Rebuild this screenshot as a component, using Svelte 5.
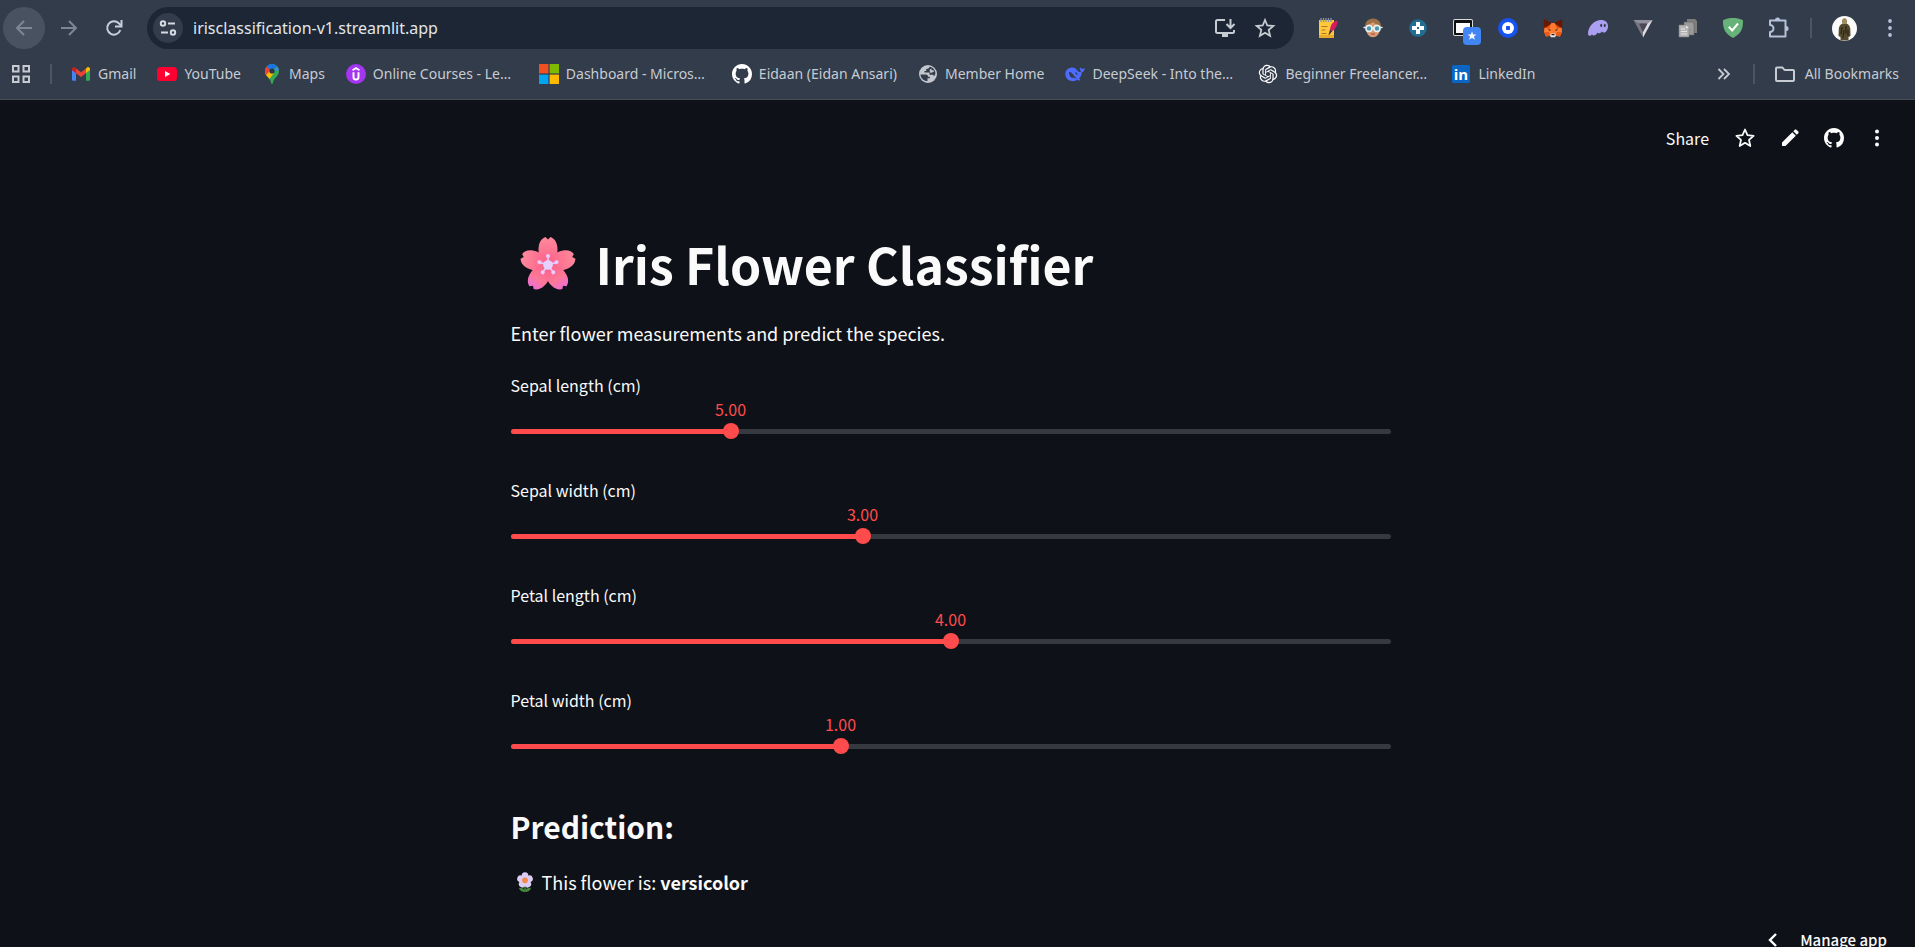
<script>
  let sliders = $state([
    { id: 'sepal-length', label: 'Sepal length (cm)', min: 4, max: 8, value: 5 },
    { id: 'sepal-width', label: 'Sepal width (cm)', min: 2, max: 4.5, value: 3 },
    { id: 'petal-length', label: 'Petal length (cm)', min: 1, max: 7, value: 4 },
    { id: 'petal-width', label: 'Petal width (cm)', min: 0.1, max: 2.5, value: 1 }
  ]);

  const percent = (s) => ((s.value - s.min) / (s.max - s.min)) * 100;

  const bookmarks = [
    { icon: 'gmail', label: 'Gmail' },
    { icon: 'youtube', label: 'YouTube' },
    { icon: 'maps', label: 'Maps' },
    { icon: 'udemy', label: 'Online Courses - Le…' },
    { icon: 'microsoft', label: 'Dashboard - Micros…' },
    { icon: 'github', label: 'Eidaan (Eidan Ansari)' },
    { icon: 'globe', label: 'Member Home' },
    { icon: 'deepseek', label: 'DeepSeek - Into the…' },
    { icon: 'openai', label: 'Beginner Freelancer…' },
    { icon: 'linkedin', label: 'LinkedIn' }
  ];

  const extensions = [
    ['notes', 'Notes'],
    ['face', 'Reader'],
    ['plus', 'Helper'],
    ['window', 'Window saver'],
    ['ring', 'Wallet'],
    ['fox', 'Fox wallet'],
    ['ghost', 'Ghost wallet'],
    ['triangle', 'Prism'],
    ['copies', 'Copies'],
    ['shield', 'Ad blocker'],
    ['puzzle', 'Extensions']
  ];
</script>

{#snippet githubMark()}
  <svg class="i20" viewBox="0 0 16 16" fill="#fff" aria-hidden="true"><path d="M8 0C3.58 0 0 3.58 0 8c0 3.54 2.29 6.53 5.47 7.59.4.07.55-.17.55-.38 0-.19-.01-.82-.01-1.49-2.01.37-2.53-.49-2.69-.94-.09-.23-.48-.94-.82-1.13-.28-.15-.68-.52-.01-.53.63-.01 1.08.58 1.23.82.72 1.21 1.87.87 2.33.66.07-.52.28-.87.51-1.07-1.78-.2-3.64-.89-3.64-3.95 0-.87.31-1.59.82-2.15-.08-.2-.36-1.02.08-2.12 0 0 .67-.21 2.2.82.64-.18 1.32-.27 2-.27.68 0 1.36.09 2 .27 1.53-1.04 2.2-.82 2.2-.82.44 1.1.16 1.92.08 2.12.51.56.82 1.27.82 2.15 0 3.07-1.87 3.75-3.65 3.95.29.25.54.73.54 1.48 0 1.07-.01 1.93-.01 2.2 0 .21.15.46.55.38A8.013 8.013 0 0016 8c0-4.42-3.58-8-8-8z" /></svg>
{/snippet}

{#snippet siteIcon(name)}
  {#if name === 'gmail'}
    <svg class="i20" viewBox="0 0 20 20" aria-hidden="true">
      <path d="M1 5.2v10.3c0 .8.5 1.3 1.300 1.300H5V8.200z" fill="#4285f4" />
      <path d="M15 8.200v8.600h2.700c.8 0 1.300-.5 1.300-1.300V5.200z" fill="#34a853" />
      <path d="M15 4.500v4.600l4-3V5c0-1.900-2-2.600-3.200-1.500z" fill="#fbbc04" />
      <path d="M5 9.200V4.400l5 3.800 5-3.800v4.800L10 13z" fill="#ea4335" />
      <path d="M1 5v1.200l4 3V4.400l-.8-.8C3 2.500 1 3.200 1 5z" fill="#c5221f" />
    </svg>
  {:else if name === 'youtube'}
    <svg class="i20" viewBox="0 0 20 20" aria-hidden="true">
      <rect x="0" y="3" width="20" height="14" rx="3.600" fill="#ff0033" />
      <path d="M8 7l5.300 3L8 13z" fill="#fff" />
    </svg>
  {:else if name === 'maps'}
    <svg class="i20" viewBox="0 0 20 20" aria-hidden="true">
      <clipPath id="pin"><path d="M10 0a7 7 0 0 0-7 7c0 3 1.600 4.600 3.300 6.600C8 15.700 8.700 17 9.100 18.900c.3 1.300 1.500 1.300 1.800 0 .4-1.900 1.100-3.200 2.800-5.300C15.400 11.600 17 10 17 7a7 7 0 0 0-7-7z" /></clipPath>
      <g clip-path="url(#pin)">
        <rect width="20" height="20" fill="#34a853" />
        <path d="M2 13L10 7l-7-5z" fill="#ea4335" />
        <path d="M2 9.500L7 6l5 3-7 9z" fill="#fbbc04" />
        <path d="M2 10V3l3-1 4 4-5 5z" fill="#ea4335" />
        <path d="M4.500 2.200L9 7l8-6-4-2H7z" fill="#1a73e8" />
        <path d="M17 1l-6 7 6-2z" fill="#4285f4" />
      </g>
      <circle cx="10" cy="7" r="2.600" fill="#2c3745" />
    </svg>
  {:else if name === 'udemy'}
    <svg class="i20" viewBox="0 0 20 20" aria-hidden="true">
      <circle cx="10" cy="10" r="10" fill="#a435f0" />
      <path d="M6.500 6.200L10 4.100l3.500 2.100" fill="none" stroke="#fff" stroke-width="1.700" />
      <path d="M7.500 8.200v4.700a2.500 2.500 0 0 0 5 0V8.200" fill="none" stroke="#fff" stroke-width="2" />
    </svg>
  {:else if name === 'microsoft'}
    <svg class="i20" viewBox="0 0 20 20" aria-hidden="true">
      <rect width="9.400" height="9.400" fill="#f25022" /><rect x="10.600" width="9.400" height="9.400" fill="#7fba00" />
      <rect y="10.600" width="9.400" height="9.400" fill="#00a4ef" /><rect x="10.600" y="10.600" width="9.400" height="9.400" fill="#ffb900" />
    </svg>
  {:else if name === 'github'}
    {@render githubMark()}
  {:else if name === 'globe'}
    <svg class="i20" viewBox="0 0 20 20" aria-hidden="true">
      <circle cx="10" cy="10" r="9" fill="#c3c7cd" />
      <path d="M2.500 10.500h5.300c1.700 0 2.200 1 2.200 2.200h1.800v1.500H9.500v2.900C5.500 17 2.500 14 2.500 10.500zM11.500 2.700c-.3 1.800-1.300 2.200-3.300 2.200v2H6.500v1.500h5v2.400h3c.8 0 1.300.5 1.300 1.500.8-.6 1.400-1.500 1.600-2.600.3-3.400-2.400-6.400-5.900-7z" fill="#323c4b" />
      <path d="M13.500 4.500v1.800h2.300v1.500l-3 1.200-1-1.200V5.500z" fill="#c3c7cd" />
    </svg>
  {:else if name === 'deepseek'}
    <svg class="i20" viewBox="0 0 20 20" aria-hidden="true">
      <path d="M19.700 3.900c-1.100.5-1.500.3-2.500 1.200-.7-.8-1.500-.7-2.200-1.800-.6 1.500-.2 2.800 1 3.600-.4 1.200-1 1.500-1.700 1.100C12.500 7 11.600 5.500 9.700 4 8.500 3.100 4.800 3 2.400 5.200.2 7.300-.1 10 .8 12.500c1.200 3.200 4.400 5 7.700 4.600 1.600-.1 2.800-.7 3.700-1.300.9.500 1.900.7 3.200.5-.2-.7-.8-1-1.300-1.700 1.700-1.800 2.500-3.700 2.800-6.300 1.600-.5 2.700-1.900 2.800-4.400z" fill="#4d6bfe" />
      <path d="M4 8c2.200-.2 3.300 1.200 4.600 3.100 1.200 1.900 1.800 2.600 3.300 3.400-1.300.2-2.300-.2-3.300-.9-.8.500-1.500.5-2.300 0C4.700 12.200 4 10.500 4 8z" fill="#323c4b" />
      <path d="M10 8.400c1.400-.2 2.400.8 2.700 2.300-.8.400-1.400 0-1.700-.8z" fill="#323c4b" />
    </svg>
  {:else if name === 'openai'}
    <svg class="i20" viewBox="-1 -1 26 26" fill="#fff" aria-hidden="true"><path d="M22.2819 9.8211a5.9847 5.9847 0 0 0-.5157-4.9108 6.0462 6.0462 0 0 0-6.5098-2.9A6.0651 6.0651 0 0 0 4.9807 4.1818a5.9847 5.9847 0 0 0-3.9977 2.9 6.0462 6.0462 0 0 0 .7427 7.0966 5.98 5.98 0 0 0 .511 4.9107 6.051 6.051 0 0 0 6.5146 2.9001A5.9847 5.9847 0 0 0 13.2599 24a6.0557 6.0557 0 0 0 5.7718-4.2058 5.9894 5.9894 0 0 0 3.9977-2.9001 6.0557 6.0557 0 0 0-.7475-7.0729zm-9.022 12.6081a4.4755 4.4755 0 0 1-2.8764-1.0408l.1419-.0804 4.7783-2.7582a.7948.7948 0 0 0 .3927-.6813v-6.7369l2.02 1.1686a.071.071 0 0 1 .038.052v5.5826a4.504 4.504 0 0 1-4.4945 4.4944zm-9.6607-4.1254a4.4708 4.4708 0 0 1-.5346-3.0137l.142.0852 4.783 2.7582a.7712.7712 0 0 0 .7806 0l5.8428-3.3685v2.3324a.0804.0804 0 0 1-.0332.0615L9.74 19.9502a4.4992 4.4992 0 0 1-6.1408-1.6464zM2.3408 7.8956a4.485 4.485 0 0 1 2.3655-1.9728V11.6a.7664.7664 0 0 0 .3879.6765l5.8144 3.3543-2.0201 1.1685a.0757.0757 0 0 1-.071 0l-4.8303-2.7865A4.504 4.504 0 0 1 2.3408 7.872zm16.5963 3.8558L13.1038 8.364 15.1192 7.2a.0757.0757 0 0 1 .071 0l4.8303 2.7913a4.4944 4.4944 0 0 1-.6765 8.1042v-5.6772a.79.79 0 0 0-.407-.667zm2.0107-3.0231l-.142-.0852-4.7735-2.7818a.7759.7759 0 0 0-.7854 0L9.409 9.2297V6.8974a.0662.0662 0 0 1 .0284-.0615l4.8303-2.7866a4.4992 4.4992 0 0 1 6.6802 4.66zM8.3065 12.863l-2.02-1.1638a.0804.0804 0 0 1-.038-.0567V6.0742a4.4992 4.4992 0 0 1 7.3757-3.4537l-.142.0805L8.704 5.459a.7948.7948 0 0 0-.3927.6813zm1.0976-2.3654l2.602-1.4998 2.6069 1.4998v2.9994l-2.5974 1.4997-2.6067-1.4997Z" /></svg>
  {:else if name === 'linkedin'}
    <svg class="i20" viewBox="0 0 20 20" aria-hidden="true">
      <rect x="1" y="1" width="18" height="18" rx="1.500" fill="#0a66c2" />
      <text x="10" y="16" text-anchor="middle" font-family="Open Sans" font-weight="700" font-size="15" fill="#fff">in</text>
    </svg>
  {/if}
{/snippet}

{#snippet extIcon(name)}
  {#if name === 'notes'}
    <svg class="i20" viewBox="0 0 20 20" aria-hidden="true">
      <path d="M1 2h15v17l-1 1H2l-1-1z" fill="#fdc93b" />
      <path d="M1 17h15v3H1z" fill="#e8a92c" />
      <path d="M3 0v4M5.500 0v4M8 0v4M10.500 0v4M13 0v4" stroke="#8793a5" stroke-width="1.300" />
      <path d="M3.500 8.500h6M3.500 12h4M3.500 15.500h5" stroke="#b0752d" stroke-width="1.200" />
      <path d="M19.500 2.500c-4 .5-7 4-7.500 9l2.500 1.500c3.500-2.500 5-6 5-10.500z" fill="#d81b60" />
      <path d="M12 11.500l2.500 1.500-3.500 4-.5-.3z" fill="#4a2b3b" />
    </svg>
  {:else if name === 'face'}
    <svg class="i20" viewBox="0 0 20 20" aria-hidden="true">
      <path d="M10 .5c5 0 8.300 3.500 8 9.500H2C1.700 4 5 .5 10 .5z" fill="#9c7044" />
      <path d="M3 9c1-3 4-2.500 7-5 2 2.500 6 2 7 5 .3 6-2.500 10.200-7 10.200S2.700 15 3 9z" fill="#d99b74" />
      <circle cx="6" cy="10.500" r="3" fill="#4b98ad" stroke="#e8f4f7" stroke-width="1.600" />
      <circle cx="14" cy="10.500" r="3" fill="#4b98ad" stroke="#e8f4f7" stroke-width="1.600" />
      <path d="M.5 9.500h2.200M17.300 9.500h2.200M8.800 10h2.400" stroke="#e8f4f7" stroke-width="1.500" />
      <path d="M8 16h4" stroke="#b6584c" stroke-width="1.300" />
    </svg>
  {:else if name === 'plus'}
    <svg class="i20" viewBox="0 0 20 20" aria-hidden="true">
      <circle cx="10" cy="10" r="8.800" fill="#226d92" />
      <path d="M8 4h4v4h4v4h-4v4H8v-4H4V8h4z" fill="#fff" />
      <path d="M9 9h2v2H9z" fill="#226d92" />
    </svg>
  {:else if name === 'window'}
    <span class="badged">
      <svg class="i20" viewBox="0 0 20 20" aria-hidden="true">
        <rect x="0" y="1" width="20" height="17" rx="2" fill="#d8dadd" />
        <rect x="1" y="2" width="18" height="15" rx="1" fill="#111" />
        <path d="M3 5h14v10H3z" fill="#fff" />
      </svg>
      <svg class="badge" viewBox="0 0 18 18" aria-hidden="true">
        <rect width="18" height="18" rx="4" fill="#4285f4" />
        <path d="M9 4.500l1.200 3h3.200l-2.500 2 1 3.200L9 10.800l-2.900 1.900 1-3.200-2.500-2h3.200z" fill="#fff" />
      </svg>
    </span>
  {:else if name === 'ring'}
    <svg class="i20" viewBox="0 0 20 20" aria-hidden="true">
      <circle cx="10" cy="10" r="10" fill="#1652f0" />
      <circle cx="10" cy="10" r="6" fill="#fff" />
      <rect x="8" y="8" width="4" height="4" rx=".8" fill="#1652f0" />
    </svg>
  {:else if name === 'fox'}
    <svg class="i20" viewBox="0 0 20 20" aria-hidden="true">
      <path d="M1.500 8L1 14l2 4.500 4.500-.8h5l4.500.8 2-4.500-.5-6-5.500-3H7z" fill="#ff7a2f" />
      <path d="M1 1l7.500 4L6 8.500 1.500 10 .5 7zM19 1l-7.500 4L14 8.500l4.500 1.500 1-3z" fill="#661800" />
      <path d="M2.500 9.500L7 6.500l-1 4.500zM17.500 9.500L13 6.500l1 4.500z" fill="#e34807" />
      <path d="M1 14h5l1.500 3.700L3 18.500zM19 14h-5l-1.500 3.700 4.500.8z" fill="#e85a18" />
      <path d="M5.500 11l2 .8v1l-1.700-.6zM14.500 11l-2 .8v1l1.700-.6z" fill="#2b1a12" />
      <path d="M7 17l1-1.500h4l1 1.500-.8 2.200H7.800z" fill="#e8e4e8" />
      <path d="M8.600 16h2.800l.3 1.200H8.300z" fill="#2b1a12" />
    </svg>
  {:else if name === 'ghost'}
    <svg class="i20" viewBox="0 0 20 20" aria-hidden="true">
      <path d="M0 15.500C0 9 6 2 13 2c5 0 7.300 3 7 7-.4 3.500-2.700 6-4.700 5.500-.9-.2-1.300-.7-1.500-1.300-.8 2.300-3.200 2.800-4.200 1.300C8.200 18 4 18.500 4.200 16 3 18.500 0 18.500 0 15.500z" fill="#ab9ff2" />
      <ellipse cx="13.200" cy="7.400" rx="1" ry="1.600" fill="#323c4b" /><ellipse cx="16.800" cy="7.400" rx="1" ry="1.600" fill="#323c4b" />
    </svg>
  {:else if name === 'triangle'}
    <svg class="i20" viewBox="0 0 20 20" aria-hidden="true">
      <path d="M.5 2h19L10 19.500z" fill="#77767f" />
      <path d="M.5 2h19l-5 3.500H6z" fill="#8f8e9a" />
      <path d="M19.500 2L10 19.500V14l4.500-8.500z" fill="#deddE5" />
      <path d="M6 5.500h8.500L10 14z" fill="#4b4754" />
    </svg>
  {:else if name === 'copies'}
    <svg class="i20" viewBox="0 0 20 20" aria-hidden="true">
      <path d="M9 1h8l2 2v12H9z" fill="#7d7d7d" />
      <path d="M6 4h8l2 2v11H6z" fill="#9b9b9b" stroke="#666" stroke-width=".6" />
      <path d="M1 7h7l3 3v9H1z" fill="#b5b5b5" stroke="#777" stroke-width=".6" />
      <path d="M3 11h4M3 13.500h6M3 16h6" stroke="#e5e5e5" />
      <path d="M8 7v3h3" fill="#e5e5e5" />
    </svg>
  {:else if name === 'shield'}
    <svg class="i20" viewBox="0 0 20 20" aria-hidden="true">
      <path d="M10 0c3.300 0 7 .6 10 2.200 0 7-.5 12.500-10 17.800C.5 14.700 0 9.200 0 2.200 3 .6 6.700 0 10 0z" fill="#67b279" />
      <path d="M5.800 8.800l3.400 3.700 5.800-7" fill="none" stroke="#fff" stroke-width="2" />
    </svg>
  {:else if name === 'puzzle'}
    <svg class="i22" viewBox="0 0 22 22" fill="none" stroke="#b4c1d8" stroke-width="2" stroke-linejoin="round" aria-hidden="true">
      <path d="M3 3.500H18.500V19.500H3v-4.500a3.200 3.200 0 0 0 0-7z" />
      <path d="M8 3a2.600 2.600 0 0 1 5.200 0zM19 8.900a2.600 2.600 0 0 1 0 5.200z" fill="#b4c1d8" stroke="none" />
    </svg>
  {/if}
{/snippet}

<div class="browser">
  <header class="chrome">
    <div class="nav-row">
      <button class="nav disabled hover" aria-label="Back">
        <svg viewBox="0 0 20 20" class="i20"><path d="M18 10H3M10 3l-7 7 7 7" fill="none" stroke="currentColor" stroke-width="2" /></svg>
      </button>
      <button class="nav disabled" aria-label="Forward">
        <svg viewBox="0 0 20 20" class="i20"><path d="M2 10h15M10 3l7 7-7 7" fill="none" stroke="currentColor" stroke-width="2" /></svg>
      </button>
      <button class="nav" aria-label="Reload">
        <svg viewBox="0 0 20 20" class="i20"><path d="M16.300 12a6.700 6.700 0 1 1-1.500-6.700L17 7.500" fill="none" stroke="currentColor" stroke-width="2" /><path d="M17.500 2v6.500H11" fill="none" stroke="currentColor" stroke-width="2" /></svg>
      </button>
      <div class="address">
        <button class="tune" aria-label="View site information">
          <svg viewBox="0 0 20 20" class="i20" fill="none" stroke="#d4dae4" stroke-width="2"><circle cx="5" cy="5.500" r="2.200" /><path d="M10 5.500h7M3 14.500h7" /><circle cx="15" cy="14.500" r="2.200" /></svg>
        </button>
        <input class="url" type="text" value="irisclassification-v1.streamlit.app" aria-label="Address" spellcheck="false" />
        <button class="inbar" aria-label="Install app">
          <svg viewBox="0 0 22 22" class="i22" fill="none" stroke="#c7cbd2" stroke-width="2"><path d="M11 3H3.500q-1.500 0-1.500 1.500v10q0 1.500 1.500 1.500h15q1.500 0 1.500-1.500V13" /><path d="M16.500 2v8.500M12.500 7l4 4 4-4" /><path d="M8 16h6v4H8z" fill="#c7cbd2" stroke="none" /></svg>
        </button>
        <button class="inbar" aria-label="Bookmark this tab">
          <svg viewBox="0 0 22 22" class="i22" fill="none" stroke="#c7cbd2" stroke-width="1.800"><path d="M11 3l2.300 5.500 6 .5-4.600 3.900 1.400 5.900L11 15.700l-5.100 3.100 1.400-5.900L2.700 9l6-.5z" /></svg>
        </button>
      </div>
      <div class="extensions">
        {#each extensions as [name, label] (name)}
          <button class="ext" aria-label={label}>{@render extIcon(name)}</button>
        {/each}
      </div>
      <span class="rule"></span>
      <button class="ext" aria-label="Profile">
        <svg class="avatar" viewBox="0 0 25 25" aria-hidden="true">
          <circle cx="12.500" cy="12.500" r="12.500" fill="#fbfbf9" />
          <path d="M12.500 2.500c1.700 0 2.500 1.300 2.200 3.500l-.4 1.500c2.500.8 3.700 2.500 4 5.500l.2 7-2 1v3.500h-8V21l-2-1 .3-7c.3-3 1.500-4.700 4-5.500L10.300 6c-.2-2.200.5-3.500 2.200-3.500z" fill="#55492e" />
          <path d="M12.500 2.500c1.700 0 2.500 1.300 2.200 3.500l-.7 2h-3l-.7-2c-.2-2.200.5-3.500 2.200-3.500z" fill="#a48d5d" />
          <path d="M10 11l-1 7M14 10v8M12 14l-1 8M16 14v6" stroke="#2c2717" stroke-width="1.200" />
        </svg>
      </button>
      <button class="ext" aria-label="Browser menu">
        <svg viewBox="0 0 20 20" class="i20" fill="#b4c1d8"><circle cx="10" cy="3" r="1.900" /><circle cx="10" cy="10" r="1.900" /><circle cx="10" cy="17" r="1.900" /></svg>
      </button>
    </div>

    <nav class="bookmarks" aria-label="Bookmarks">
      <button class="plain" aria-label="Apps">
        <svg viewBox="0 0 20 20" class="i20" fill="none" stroke="#c7cbd2" stroke-width="2"><rect x="2" y="2" width="5.500" height="5.500" /><rect x="12.500" y="2" width="5.500" height="5.500" /><rect x="2" y="12.500" width="5.500" height="5.500" /><rect x="12.500" y="12.500" width="5.500" height="5.500" /></svg>
      </button>
      <span class="rule"></span>
      <div class="links">
        {#each bookmarks as b (b.icon)}
          <a class="mark" class:long={b.label.endsWith('…')} href="#{b.icon}">{@render siteIcon(b.icon)}<span>{b.label}</span></a>
        {/each}
      </div>
      <button class="plain more" aria-label="More bookmarks">
        <svg viewBox="0 0 20 20" class="i20" fill="none" stroke="#c7cbd2" stroke-width="1.800"><path d="M4.500 5l5 5-5 5M10 5l5 5-5 5" /></svg>
      </button>
      <span class="rule"></span>
      <a class="mark all" href="#all">
        <svg viewBox="0 0 22 20" class="i22" fill="none" stroke="#c7cbd2" stroke-width="2" stroke-linejoin="round" aria-hidden="true"><path d="M2 4.500q0-1 1-1h5.500l2 2.500H19q1 0 1 1v9q0 1-1 1H3q-1 0-1-1z" /></svg>
        <span>All Bookmarks</span>
      </a>
    </nav>
  </header>

  <div class="app">
    <div class="toolbar">
      <button class="share">Share</button>
      <button aria-label="Favorite">
        <svg viewBox="0 0 22 22" class="i22" fill="none" stroke="#fafafa" stroke-width="1.800" stroke-linejoin="round"><path d="M11 2.500l2.500 5.700 6.100.6-4.600 4.100 1.300 6.100L11 15.800 5.700 19 7 12.900 2.400 8.800l6.100-.6z" /></svg>
      </button>
      <button aria-label="Edit">
        <svg viewBox="0 0 22 22" class="i22" fill="#fafafa"><path d="M3 15.500L13.300 5.200l3.500 3.500L6.500 19H3zM14.300 4.200l1.500-1.500q.8-.8 1.600 0l1.900 1.900q.8.8 0 1.600l-1.500 1.500z" /></svg>
      </button>
      <button aria-label="View source">{@render githubMark()}</button>
      <button class="dots" aria-label="App menu">
        <svg viewBox="0 0 20 20" class="i20" fill="#fafafa"><circle cx="10" cy="3.500" r="2" /><circle cx="10" cy="10" r="2" /><circle cx="10" cy="16.500" r="2" /></svg>
      </button>
    </div>

    <main>
      <h1>
        <svg class="blossom" viewBox="0 -2 56 60" role="img" aria-label="Cherry blossom">
          <defs>
            <linearGradient id="petal" gradientUnits="userSpaceOnUse" x1="0" y1="2" x2="0" y2="30">
              <stop offset="0" stop-color="#ff8a9c" /><stop offset="1" stop-color="#fb6088" />
            </linearGradient>
            <linearGradient id="petal-low" gradientUnits="userSpaceOnUse" x1="0" y1="2" x2="0" y2="30">
              <stop offset="0" stop-color="#ec6fd6" /><stop offset=".4" stop-color="#fd7896" /><stop offset="1" stop-color="#fb6088" />
            </linearGradient>
          </defs>
          {#each [0, 72, 288, 144, 216] as turn (turn)}
            <path d="M28 31C20 25 17.500 19 18.800 11 19.500 6 22.500 3 25.500 2L28 4.500 30.500 2C33.500 3 36.500 6 37.200 11 38.500 19 36 25 28 31z" transform="rotate({turn} 28 30)" fill={turn === 144 || turn === 216 ? 'url(#petal-low)' : 'url(#petal)'} />
          {/each}
          {#each [0, 72, 144, 216, 288] as turn (turn)}
            <g transform="rotate({turn} 28 30)"><path d="M28 30V21.500" stroke="#e8ccff" stroke-width="1.600" /><circle cx="28" cy="21" r="2" fill="#e8ccff" /></g>
          {/each}
          <circle cx="28" cy="30" r="4.800" fill="#e5d0ff" />
        </svg>
        <span>Iris Flower Classifier</span>
      </h1>
      <p class="intro">Enter flower measurements and predict the species.</p>

      <form class="sliders">
        {#each sliders as s (s.id)}
          <div class="field">
            <label for={s.id}>{s.label}</label>
            <div class="value-row">
              <output for={s.id} style="left: {percent(s)}%">{s.value.toFixed(2)}</output>
            </div>
            <div class="track">
              <div class="rail"><div class="fill" style="width: {percent(s)}%"></div></div>
              <input id={s.id} type="range" min={s.min} max={s.max} step="0.1" bind:value={s.value} />
            </div>
          </div>
        {/each}
      </form>

      <h2>Prediction:</h2>
      <p class="result">
        <svg class="flower" viewBox="0 0 20 20" role="img" aria-label="Flower">
          <path d="M10 12v7" stroke="#4b8a3c" stroke-width="1.600" />
          <path d="M4 16c2.500-.6 4.700.3 6 3 1.300-2.700 3.500-3.600 6-3-.6 2.600-3 4-6 4s-5.400-1.400-6-4z" fill="#47883c" />
          {#each [0, 72, 144, 216, 288] as turn (turn)}
            <ellipse cx="10" cy="4.200" rx="3.500" ry="4" transform="rotate({turn} 10 8.300)" fill="#dccdf2" />
          {/each}
          <circle cx="10" cy="8.300" r="2.900" fill="#f58a4b" />
        </svg>
        <span>This flower is: <strong>versicolor</strong></span>
      </p>
    </main>

    <button class="manage">
      <svg viewBox="0 0 20 20" class="i20" fill="none" stroke="#fff" stroke-width="2.400" aria-hidden="true"><path d="M13 4l-6 6 6 6" /></svg>
      <span>Manage app</span>
    </button>
  </div>
</div>

<style>
  :global(body) {
    margin: 0;
    background: #0e1117;
  }
  .browser {
    display: flex;
    flex-direction: column;
    height: 100vh;
    overflow: hidden;
  }
  button {
    display: flex;
    align-items: center;
    justify-content: center;
    padding: 0;
    border: 0;
    background: none;
    color: inherit;
    font: inherit;
    cursor: pointer;
  }
  svg {
    display: block;
    flex: none;
  }
  .i20 {
    width: 20px;
    height: 20px;
  }
  .i22 {
    width: 22px;
    height: 22px;
  }

  .chrome {
    flex: none;
    padding-top: 7px;
    border-bottom: 1px solid #484d55;
    background: #323c4b;
    color: #c7cbd2;
    font-family: 'Noto Sans', 'Open Sans', sans-serif;
    font-size: 14px;
  }
  .nav-row {
    display: flex;
    align-items: center;
    padding: 0 3px;
  }
  .nav {
    width: 42px;
    height: 42px;
    margin-right: 3px;
    border-radius: 50%;
    color: #c3cede;
  }
  .nav.disabled {
    color: #7d8694;
  }
  .nav.hover {
    background: #495260;
  }
  .address {
    display: flex;
    flex: 1;
    align-items: center;
    min-width: 0;
    height: 42px;
    margin: 0 11px 0 9px;
    padding: 0 9px 0 6px;
    border-radius: 21px;
    background: #1c2635;
  }
  .tune {
    width: 30px;
    height: 30px;
    border-radius: 50%;
    background: #323c4b;
  }
  .url {
    flex: 1;
    min-width: 0;
    padding: 0 0 0 10px;
    border: 0;
    outline: 0;
    background: none;
    color: #e3e6ea;
    font: inherit;
    font-size: 16px;
    line-height: 24px;
  }
  .inbar {
    width: 40px;
    height: 40px;
  }
  .extensions {
    display: flex;
  }
  .ext {
    width: 45px;
    height: 42px;
  }
  .avatar {
    width: 25px;
    height: 25px;
  }
  .badged {
    position: relative;
  }
  .badge {
    position: absolute;
    top: 9px;
    left: 10px;
    width: 18px;
    height: 18px;
  }
  .rule {
    flex: none;
    width: 2px;
    height: 20px;
    margin: 0 10px;
    background: #4b5564;
  }

  .bookmarks {
    display: flex;
    align-items: center;
    height: 50px;
    padding: 0 16px 0 11px;
  }
  .bookmarks .rule {
    margin: 0 19px;
  }
  .links {
    display: flex;
    flex: 1;
    gap: 21px;
    min-width: 0;
    overflow: hidden;
  }
  .mark {
    display: flex;
    flex: none;
    gap: 7px;
    align-items: center;
    color: inherit;
    line-height: 20px;
    text-decoration: none;
    white-space: nowrap;
  }
  .mark.long {
    min-width: 172px;
  }
  .mark.all {
    gap: 9px;
  }

  .app {
    position: relative;
    flex: 1;
    min-height: 0;
    overflow: hidden;
    background: #0e1117;
    color: #fafafa;
    font-family: 'Noto Sans CJK SC', 'Noto Sans', sans-serif;
  }
  .toolbar {
    display: flex;
    gap: 23px;
    align-items: center;
    justify-content: flex-end;
    height: 76px;
    padding-right: 28px;
    font-size: 16px;
  }
  .toolbar .share {
    margin-right: 2px;
  }
  main {
    box-sizing: border-box;
    width: 100%;
    max-width: 894px;
    margin: 0 auto;
    padding: 55px 14px 0 0;
  }
  h1 {
    display: flex;
    gap: 20px;
    align-items: center;
    margin: 0;
    padding-left: 9px;
    font-size: 50px;
    font-weight: 700;
    line-height: 64px;
  }
  .blossom {
    width: 56px;
    height: 60px;
  }
  .intro {
    margin: 23px 0 0;
    font-size: 18px;
    line-height: 30px;
  }
  .sliders {
    display: grid;
    gap: 35px;
    margin-top: 24px;
  }
  .field label {
    display: block;
    font-size: 16px;
    line-height: 26px;
  }
  .value-row {
    position: relative;
    height: 22px;
    color: #ff4b4b;
    font-size: 16px;
    line-height: 22px;
  }
  .value-row output {
    position: absolute;
    transform: translateX(-50%);
  }
  .track {
    display: grid;
    align-items: center;
    height: 22px;
  }
  .rail,
  .track input {
    grid-area: 1 / 1;
  }
  .rail {
    height: 5px;
    overflow: hidden;
    border-radius: 3px;
    background: #363940;
  }
  .fill {
    height: 100%;
    background: #ff4b4b;
  }
  .track input {
    width: calc(100% + 16px);
    height: 16px;
    margin: 0 -8px;
    appearance: none;
    background: none;
    cursor: pointer;
  }
  .track input::-webkit-slider-thumb {
    width: 16px;
    height: 16px;
    appearance: none;
    border: 0;
    border-radius: 50%;
    background: #ff4b4b;
  }
  h2 {
    margin: 47px 0 0;
    font-size: 30px;
    font-weight: 600;
    line-height: 44px;
  }
  .result {
    display: flex;
    gap: 7px;
    align-items: center;
    margin: 18px 0 0;
    padding-left: 4px;
    font-size: 18px;
    line-height: 32px;
  }
  .flower {
    width: 20px;
    height: 20px;
  }
  .manage {
    position: absolute;
    right: 28px;
    bottom: -9px;
    gap: 17px;
    font-size: 15px;
    font-weight: 500;
    line-height: 32px;
  }
</style>
